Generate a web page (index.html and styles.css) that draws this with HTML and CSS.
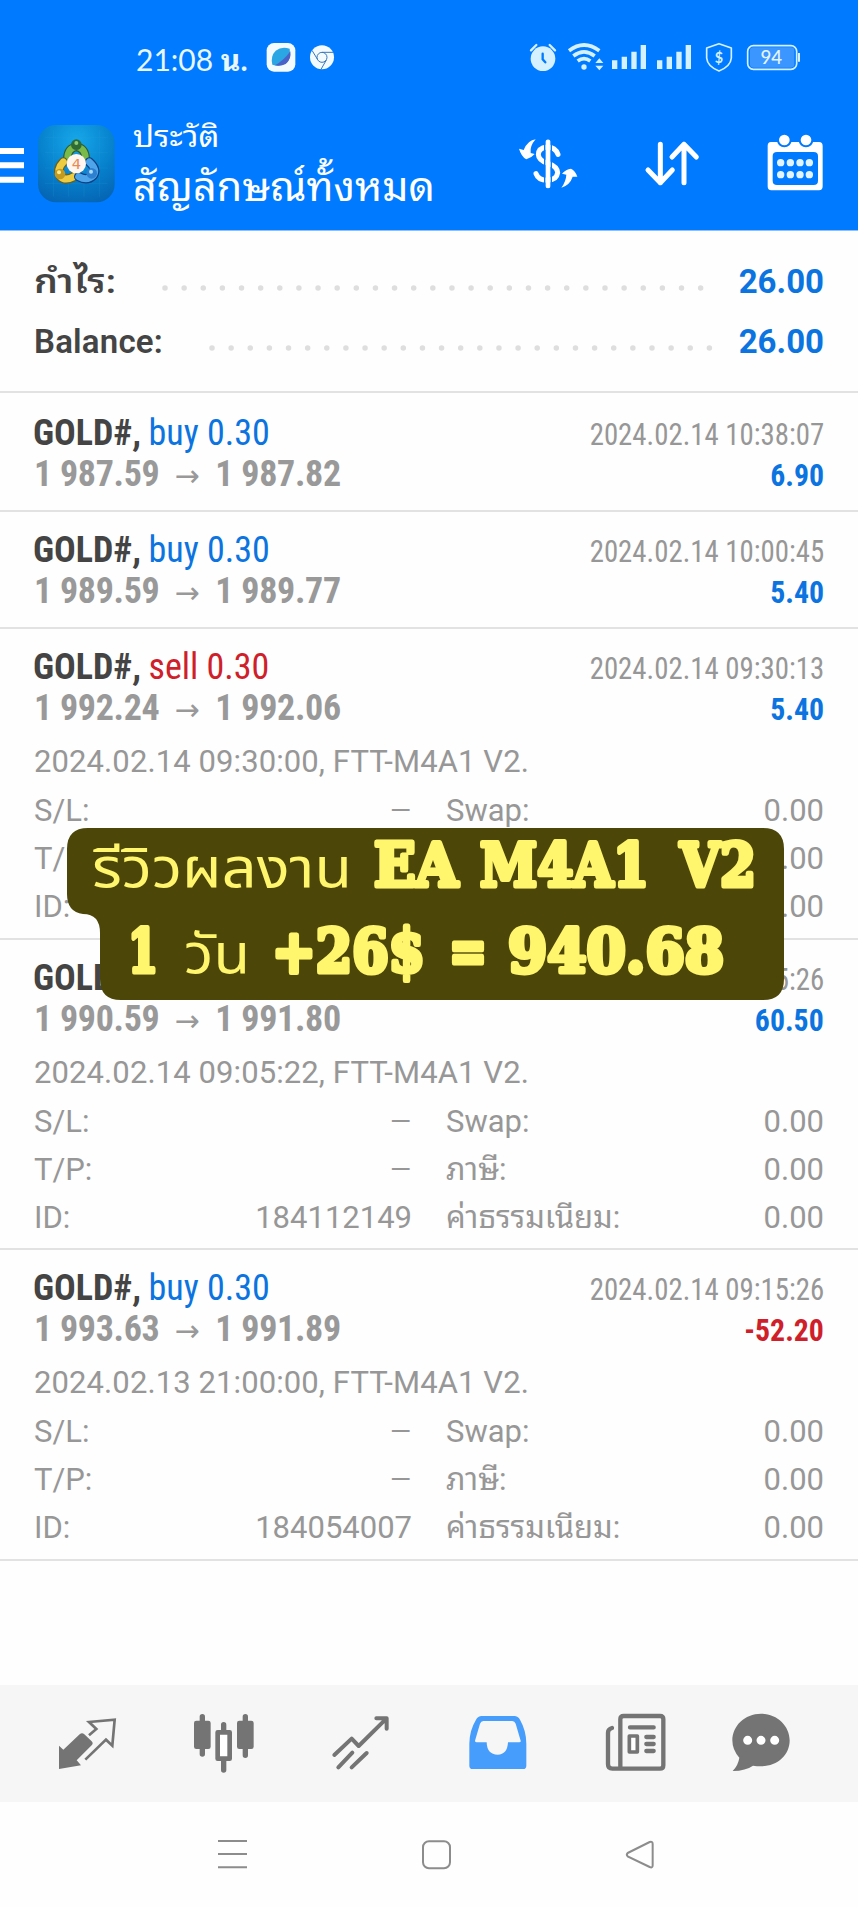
FILE: index.html
```html
<!DOCTYPE html>
<html lang="th">
<head>
  <meta charset="UTF-8" />
  <meta name="viewport" content="width=device-width, initial-scale=1.0" />
  <title>ประวัติ</title>
  <link rel="stylesheet" href="styles.css">
</head>
<body>
  <!-- Header -->
  <header class="header">
    <div class="status">
      <span class="status__time">21:08 <b>น.</b></span>
      <svg class="status__app" width="30" height="32" viewBox="799 66 90 96">
        <rect x="801" y="69" width="86" height="86" rx="22" fill="#f4fbff"/>
        <path d="M818 134Q812 108 828 92Q846 78 870 86Q874 112 862 128Q842 142 818 134Z" fill="#2ba6e4"/>
        <path d="M826 136 Q852 122 872 94 Q876 118 858 132 Q842 140 826 136Z" fill="#4a62c8"/>
      </svg>
      <svg class="status__chrome" width="26" height="32" viewBox="929 66 78 96">
        <circle cx="968" cy="112" r="36" fill="#f4fbff"/>
        <g fill="none" stroke="#3a78b8" stroke-width="3">
          <circle cx="968" cy="112" r="15"/>
          <path d="M968 97H1002M955 119L938 91M981 120L965 148"/>
        </g>
      </svg>
      <div class="status__right">
        <svg width="28" height="32" viewBox="297 66 84 96">
          <circle cx="339" cy="116" r="37" fill="#d5f0ff"/>
          <path d="M303 91L319 75M375 91L359 75" stroke="#d5f0ff" stroke-width="7" stroke-linecap="round"/>
          <path d="M338 101V118L346 127" fill="none" stroke="#007aff" stroke-width="7" stroke-linecap="round"/>
        </svg>
        <svg class="wifi" width="36" height="32" viewBox="414 66 108 96">
          <g fill="none" stroke="#d5f0ff" stroke-width="11">
            <path d="M417 92Q462 58 508 92"/>
            <path d="M430 108Q462 83 494 108"/>
            <path d="M443 123Q462 109 481 123"/>
          </g>
          <circle cx="462" cy="141" r="8" fill="#d5f0ff"/>
          <path d="M508 115L520 129H496ZM508 151L520 137H496Z" fill="#d5f0ff"/>
        </svg>
        <svg class="signal" width="36" height="32" viewBox="543 66 108 96">
          <path d="M546 121h16v26h-16zM575 110h16v37h-16zM604 95h16v52h-16zM632 75h16v72h-16z" fill="#d5f0ff"/>
        </svg>
        <svg class="signal2" width="36" height="32" viewBox="543 66 108 96">
          <path d="M546 121h16v26h-16zM575 110h16v37h-16zM604 95h16v52h-16zM632 75h16v72h-16z" fill="#d5f0ff"/>
        </svg>
        <svg class="shield" width="28" height="32" viewBox="825 66 84 96">
          <path d="M867 71L904 84V114Q902 139 867 153Q832 139 830 114V84Z" fill="none" stroke="#d5f0ff" stroke-width="5" stroke-linejoin="round"/>
          <text class="shield__text" x="867" y="128" text-anchor="middle">$</text>
        </svg>
        <svg class="battery" width="55" height="32" viewBox="948 66 165 96">
          <rect x="960" y="82" width="133" height="61" rx="10" fill="#3b96ff"/>
          <rect x="953" y="77" width="147" height="71" rx="17" fill="none" stroke="#d5f0ff" stroke-width="5"/>
          <path d="M1107 99V125" stroke="#d5f0ff" stroke-width="6"/>
          <text class="battery__text" x="1024" y="132" text-anchor="middle">94</text>
        </svg>
      </div>
    </div>

    <div class="appbar">
      <svg class="appbar__menu" width="24" height="36" viewBox="0 384 72 108">
        <path d="M0 393H72M0 436H72M0 479H72" stroke="#fff" stroke-width="18"/>
      </svg>
      <svg class="appbar__logo" width="78" height="80" viewBox="114 312 234 240">
        <defs>
          <radialGradient id="logoBg" cx=".5" cy=".2" r=".85">
            <stop offset="0" stop-color="#16a8ea"/>
            <stop offset=".6" stop-color="#067fcb"/>
            <stop offset="1" stop-color="#0565b4"/>
          </radialGradient>
        </defs>
        <rect x="114" y="315" width="230" height="232" rx="54" fill="url(#logoBg)"/>
        <path d="M135 352H323M135 398H323M135 444H323M135 490H323M160 330V530M206 330V530M252 330V530M298 330V530" stroke="#2d9fdd" stroke-width="1.5" opacity=".4"/>
        <g stroke-linecap="round" fill="none">
          <path d="M202 416Q203 385 229 380Q256 385 257 416" stroke="#2e5b2f" stroke-width="26"/>
          <path d="M202 416Q203 385 229 380Q256 385 257 416" stroke="#79ba4b" stroke-width="19"/>
          <path d="M190 426Q168 448 182 470Q196 484 222 470" stroke="#6a6018" stroke-width="28"/>
          <path d="M190 426Q168 448 182 470Q196 484 222 470" stroke="#edcc42" stroke-width="21"/>
          <path d="M268 426Q292 448 280 466Q262 484 236 470" stroke="#0b3e83" stroke-width="28"/>
          <path d="M268 426Q292 448 280 466Q262 484 236 470" stroke="#4fa5ea" stroke-width="21"/>
        </g>
        <circle cx="229" cy="374" r="16" fill="#2f6b35"/>
        <circle cx="180" cy="462" r="16" fill="#c39a20"/>
        <circle cx="275" cy="460" r="16" fill="#2d80cf"/>
        <circle cx="229" cy="369" r="6" fill="#8ccb77"/>
        <circle cx="177" cy="457" r="6" fill="#ffed91"/>
        <circle cx="273" cy="455" r="6" fill="#a9dcff"/>
        <circle cx="229" cy="431" r="29" fill="#fff6ef"/>
        <text class="logo__text" x="229" y="447" text-anchor="middle">4</text>
      </svg>
      <div class="appbar__titles">
        <div class="appbar__small">ประวัติ</div>
        <div class="appbar__big">สัญลักษณ์ทั้งหมด</div>
      </div>
      <div class="appbar__actions">
        <svg width="60" height="56" viewBox="264 345 180 168">
          <g fill="none" stroke="#fff" stroke-width="15" stroke-linecap="round">
            <path d="M354 366V497"/>
            <path d="M384 403Q376 381 351 381Q325 384 325 404Q326 422 354 430Q382 439 383 458Q380 480 352 481Q325 481 318 461"/>
          </g>
          <path d="M344 356V505M364 356V505" stroke="#007aff" stroke-width="4"/>
          <path d="M317 358Q294 360 281 390L267 386Q274 410 289 418Q304 414 314 402L302 399Q299 378 317 358ZM394 503Q408 484 409 464L396 461Q408 447 423 446Q436 452 442 470L428 470Q420 495 394 503Z" fill="#fff"/>
        </svg>
        <svg class="sort" width="56" height="56" viewBox="642 345 168 168">
          <path d="M691 373V488M654 450L691 488L727 450M762 488V373M726 411L762 373L799 411" fill="none" stroke="#fff" stroke-width="15" stroke-linecap="round" stroke-linejoin="round"/>
        </svg>
        <svg class="calendar" width="56" height="58" viewBox="1010 342 168 174">
          <path d="M1022 366H1166Q1177 366 1177 378V499Q1177 511 1166 511H1023Q1012 511 1012 499V378Q1012 366 1022 366ZM1040 396Q1027 396 1027 408V482Q1027 495 1040 495H1150Q1163 495 1163 482V408Q1163 396 1150 396Z" fill="#fff" fill-rule="evenodd"/>
          <g fill="#fff" stroke="#007aff" stroke-width="6">
            <circle cx="1062" cy="360" r="19"/>
            <circle cx="1127" cy="360" r="19"/>
          </g>
          <path d="M1051 428h.1M1080 428h.1M1109 428h.1M1137 428h.1M1051 464h.1M1080 464h.1M1109 464h.1M1137 464h.1" stroke="#e2f4ff" stroke-width="22" stroke-linecap="round"/>
        </svg>
      </div>
    </div>
  </header>

  <!-- Totals -->
  <section class="summary">
    <div class="summary__row">
      <span class="summary__label summary__label--thai">กำไร:</span>
      <svg class="dots dots--profit" height="6"><path d="M3 3H540" /></svg>
      <span class="summary__value">26.00</span>
    </div>
    <div class="summary__row">
      <span class="summary__label">Balance:</span>
      <svg class="dots dots--balance" height="6"><path d="M3 3H502" /></svg>
      <span class="summary__value">26.00</span>
    </div>
  </section>

  <!-- Closed trades -->
  <main class="trades">
    <div class="trade">
      <div class="trade__line">
        <span class="trade__symbol">GOLD#, <span class="buy">buy 0.30</span></span>
        <span class="trade__date">2024.02.14 10:38:07</span>
      </div>
      <div class="trade__line">
        <span class="trade__price">1 987.59 <i>→</i> 1 987.82</span>
        <span class="trade__profit">6.90</span>
      </div>
    </div>

    <div class="trade">
      <div class="trade__line">
        <span class="trade__symbol">GOLD#, <span class="buy">buy 0.30</span></span>
        <span class="trade__date">2024.02.14 10:00:45</span>
      </div>
      <div class="trade__line">
        <span class="trade__price">1 989.59 <i>→</i> 1 989.77</span>
        <span class="trade__profit">5.40</span>
      </div>
    </div>

    <div class="trade trade--open">
      <div class="trade__line">
        <span class="trade__symbol">GOLD#, <span class="sell">sell 0.30</span></span>
        <span class="trade__date">2024.02.14 09:30:13</span>
      </div>
      <div class="trade__line">
        <span class="trade__price">1 992.24 <i>→</i> 1 992.06</span>
        <span class="trade__profit">5.40</span>
      </div>
      <div class="trade__comment">2024.02.14 09:30:00, FTT-M4A1 V2.</div>
      <div class="details">
        <span>S/L:</span><span class="dash">—</span><span>Swap:</span><span>0.00</span>
        <span>T/P:</span><span></span><span></span><span>0.00</span>
        <span>ID:</span><span></span><span></span><span>0.00</span>
      </div>
    </div>

    <div class="trade trade--open">
      <div class="trade__line">
        <span class="trade__symbol">GOLD#,</span>
        <span class="trade__date">2024.02.14 09:15:26</span>
      </div>
      <div class="trade__line">
        <span class="trade__price">1 990.59 <i>→</i> 1 991.80</span>
        <span class="trade__profit">60.50</span>
      </div>
      <div class="trade__comment">2024.02.14 09:05:22, FTT-M4A1 V2.</div>
      <div class="details">
        <span>S/L:</span><span class="dash">—</span><span>Swap:</span><span>0.00</span>
        <span>T/P:</span><span class="dash">—</span><span>ภาษี:</span><span>0.00</span>
        <span>ID:</span><span>184112149</span><span>ค่าธรรมเนียม:</span><span>0.00</span>
      </div>
    </div>

    <div class="trade trade--open">
      <div class="trade__line">
        <span class="trade__symbol">GOLD#, <span class="buy">buy 0.30</span></span>
        <span class="trade__date">2024.02.14 09:15:26</span>
      </div>
      <div class="trade__line">
        <span class="trade__price">1 993.63 <i>→</i> 1 991.89</span>
        <span class="trade__profit loss">-52.20</span>
      </div>
      <div class="trade__comment">2024.02.13 21:00:00, FTT-M4A1 V2.</div>
      <div class="details">
        <span>S/L:</span><span class="dash">—</span><span>Swap:</span><span>0.00</span>
        <span>T/P:</span><span class="dash">—</span><span>ภาษี:</span><span>0.00</span>
        <span>ID:</span><span>184054007</span><span>ค่าธรรมเนียม:</span><span>0.00</span>
      </div>
    </div>
  </main>

  <!-- Tab bar -->
  <nav class="tabs">
    <svg width="60" height="60" viewBox="171 96 180 180">
      <path d="M177 197L190 209L239 163Q246 156 253 163L275 184Q281 190 275 196L230 241L243 256L177 267Z" fill="#747474"/>
      <path d="M267 166L289 147L267 126L344 119L337 197L318 179L256 239" fill="none" stroke="#747474" stroke-width="8"/>
    </svg>
    <svg width="60" height="60" viewBox="582 96 180 180">
      <path d="M607 110V222M736 110V226M671 134V150M671 240V270" stroke="#747474" stroke-width="16" stroke-linecap="round"/>
      <rect x="582" y="122" width="50" height="85" rx="7" fill="#747474"/>
      <rect x="711" y="122" width="50" height="85" rx="7" fill="#747474"/>
      <rect x="653" y="157" width="36" height="79" fill="#fff" stroke="#747474" stroke-width="14" stroke-linejoin="round"/>
    </svg>
    <svg width="60" height="60" viewBox="993 96 180 180">
      <g fill="none" stroke="#747474" stroke-width="12" stroke-linecap="round" stroke-linejoin="round">
        <path d="M1003 225L1055 176L1076 198L1159 116M1129 115H1160V146"/>
        <path d="M1015 262L1057 218M1055 262L1100 219"/>
      </g>
    </svg>
    <svg width="60" height="60" viewBox="114 96 180 180">
      <path d="M155 108H253Q264 108 270 119Q289 152 289 191V257Q289 267 279 267H128Q118 267 118 257V191Q118 152 138 119Q144 108 155 108ZM160 123Q153 123 150 131L135 182Q135 187 140 187H170Q171 224 203 224Q232 224 234 187H268Q273 187 272 182L257 131Q254 123 247 123Z" fill="#479dfb" fill-rule="evenodd"/>
    </svg>
    <svg width="60" height="60" viewBox="525 96 180 180">
      <g fill="none" stroke="#747474" stroke-width="13" stroke-linecap="round" stroke-linejoin="round">
        <path d="M546 144Q534 147 534 158V253Q534 266 547 266H690Q700 266 700 256V118Q700 108 690 108H581Q571 108 571 118V264"/>
        <path d="M600 142H671M649 171H671M649 192H671M649 213H671"/>
      </g>
      <rect x="598" y="168" width="24" height="48" fill="#fff" stroke="#747474" stroke-width="11" stroke-linejoin="round"/>
    </svg>
    <svg class="tabs__chat" width="60" height="60" viewBox="900 96 180 180">
      <path d="M993 101C1042 101 1079 138 1079 181C1079 226 1042 259 993 259Q980 259 969 257Q948 272 908 273Q925 255 928 233Q907 210 907 181C907 138 944 101 993 101Z" fill="#747474"/>
      <path d="M953 181h.1M993 181h.1M1034 181h.1" stroke="#fff" stroke-width="27" stroke-linecap="round"/>
    </svg>
  </nav>

  <!-- System buttons -->
  <div class="sysbar">
    <svg width="32" height="32" viewBox="650 478 96 96">
      <path d="M653 484H740M653 523H740M653 563H740" stroke="#8c8c8c" stroke-width="6"/>
    </svg>
    <svg width="32" height="32" viewBox="0 0 32 32">
      <rect x="2" y="2.200" width="27" height="27" rx="6" fill="none" stroke="#8c8c8c" stroke-width="2"/>
    </svg>
    <svg width="32" height="32" viewBox="590 476 96 96">
      <path d="M598 518L664 485Q673 482 673 491V555Q673 564 664 560L598 528Q593 523 598 518Z" fill="none" stroke="#8c8c8c" stroke-width="6"/>
    </svg>
  </div>

  <!-- Caption sticker -->
  <svg class="caption" width="718" height="172" viewBox="67 828 718 172">
    <path d="M88 828H763Q784 828 784 849V979Q784 1000 763 1000H121Q100 1000 100 979V933Q100 914 83 914Q67 912 67 894V849Q67 828 88 828Z" fill="#4c4608"/>
    <g class="caption__thai">
      <text x="92" y="887" textLength="260" lengthAdjust="spacingAndGlyphs">รีวิวผลงาน</text>
      <text x="184" y="973" textLength="66" lengthAdjust="spacingAndGlyphs">วัน</text>
    </g>
    <g class="caption__bold">
      <text x="374" y="886" textLength="84" lengthAdjust="spacingAndGlyphs">EA</text>
      <text x="480" y="886" textLength="169" lengthAdjust="spacingAndGlyphs">M4A1</text>
      <text x="680" y="886" textLength="76" lengthAdjust="spacingAndGlyphs">V2</text>
      <text x="128" y="972" textLength="30" lengthAdjust="spacingAndGlyphs">1</text>
      <text x="272" y="972" textLength="153" lengthAdjust="spacingAndGlyphs">+26$</text>
      <text x="449" y="972" textLength="38" lengthAdjust="spacingAndGlyphs">=</text>
      <text x="508" y="972" textLength="216" lengthAdjust="spacingAndGlyphs">940.68</text>
    </g>
  </svg>
</body>
</html>
```

FILE: styles.css
```css
:root {
  --blue: #007aff;
  --buy: #0b74e0;
  --sell: #cf1f2b;
  --dark: #444;
  --grey: #979797;
  --line: #e2e2e2;
}

* {
  box-sizing: border-box;
}

body {
  position: relative;
  margin: 0;
  width: 858px;
  height: 1907px;
  overflow: hidden;
  display: flex;
  flex-direction: column;
  background: #fefefe;
  font-family: Roboto, "Noto Sans Thai Looped", "Noto Looped Thai", Loma, Garuda, Waree, "Noto Sans Thai", sans-serif;
}

svg {
  display: block;
  flex: none;
  overflow: visible;
}

/* Header */
.header {
  height: 231px;
  background: var(--blue);
  border-bottom: 1px solid #8fbff8;
  color: #fff;
}

.status {
  height: 104px;
  padding: 42px 57px 0 136px;
  display: flex;
  align-items: flex-start;
  color: #e8f7ff;
}

.status__time {
  width: 111px;
  font-family: Lato, "Noto Sans Thai Looped", "Noto Looped Thai", Loma, Garuda, Waree, sans-serif;
  font-size: 30px;
  line-height: 34px;
  white-space: nowrap;
}

.status__app {
  margin-left: 19px;
}

.status__chrome {
  margin-left: 13px;
}

.status__right {
  display: flex;
  margin-left: auto;
}

.wifi {
  margin-left: 11px;
}

.signal {
  margin-left: 7px;
}

.signal2 {
  margin-left: 9px;
}

.shield,
.battery {
  margin-left: 13px;
}

.shield__text {
  font: 700 43px Lato, sans-serif;
  fill: #d5f0ff;
}

.battery__text {
  font: 500 56px Lato, sans-serif;
  fill: #e2f5ff;
}

.appbar {
  height: 126px;
  padding-right: 35px;
  display: flex;
  align-items: flex-start;
}

.appbar__menu {
  margin-top: 44px;
}

.appbar__logo {
  margin: 20px 0 0 14px;
}

.logo__text {
  font: 400 44px "DejaVu Sans", sans-serif;
  fill: #e88a55;
}

.appbar__titles {
  margin-left: 17px;
  white-space: nowrap;
}

.appbar__small {
  margin-top: 9px;
  height: 48px;
  font-size: 30px;
  line-height: 48px;
  transform: scaleX(1.09);
  transform-origin: left;
}

.appbar__big {
  font-size: 40px;
  line-height: 54px;
  transform: scaleX(1.033);
  transform-origin: left;
}

.appbar__actions {
  display: flex;
  margin: 31px 0 0 auto;
}

.sort {
  margin-left: 66px;
}

.calendar {
  margin: -1px 0 0 67px;
}

/* Totals */
.summary {
  height: 162px;
  padding: 20px 34px 0;
  border-bottom: 2px solid var(--line);
}

.summary__row {
  height: 60px;
  display: flex;
  align-items: center;
  font-size: 33px;
  font-weight: 700;
}

.summary__label {
  color: var(--dark);
  font-weight: 600;
  letter-spacing: 0.2px;
}

.summary__label--thai {
  margin-top: -5px;
  transform: scaleX(1.14);
  transform-origin: left;
}

.summary__value {
  color: var(--buy);
}

.dots {
  margin: 14px 0 0 auto;
}

.dots path {
  fill: none;
  stroke: #dedede;
  stroke-width: 5.5;
  stroke-linecap: round;
  stroke-dasharray: 0 19.13;
}

.dots--profit {
  width: 577px;
}

.dots--balance {
  width: 530px;
}

/* Closed trades */
.trades {
  flex: 1;
  padding-top: 2px;
}

.trade {
  height: 117px;
  padding: 18px 34px 0;
  border-bottom: 2px solid var(--line);
  white-space: nowrap;
}

.trade--open {
  height: 310.7px;
}

.trade__line {
  height: 41px;
  display: flex;
  justify-content: space-between;
  align-items: baseline;
  font-family: "Roboto Condensed", Roboto, sans-serif;
  font-stretch: 75%;
  line-height: 41px;
}

.trade__symbol {
  margin-left: -1px;
  font-size: 36px;
  font-weight: 700;
  color: var(--dark);
}

.trade__symbol span {
  margin-left: -1px;
  font-weight: 400;
}

.buy {
  color: var(--buy);
}

.sell {
  color: var(--sell);
}

.trade__date {
  font-size: 31px;
  color: var(--grey);
  transform: scaleX(0.93);
  transform-origin: right;
}

.trade__price {
  font-size: 36px;
  font-weight: 700;
  letter-spacing: -0.3px;
  color: #999;
}

.trade__price i {
  margin: 0 8px 0 7px;
  font: normal 400 30px "DejaVu Sans", sans-serif;
}

.trade__profit {
  font-size: 31px;
  font-weight: 700;
  color: var(--buy);
  transform: scaleX(0.96);
  transform-origin: right;
}

.loss {
  color: var(--sell);
}

.trade__comment {
  margin-top: 9px;
  height: 49px;
  font-size: 31px;
  letter-spacing: 0.1px;
  line-height: 48px;
  color: var(--grey);
}

.details {
  display: grid;
  grid-template-columns: 100px 278px 234px 178px;
  grid-auto-rows: 48px;
  font-size: 31px;
  line-height: 48px;
  color: var(--grey);
}

.details span:nth-child(even) {
  text-align: right;
}

.details span:nth-child(4n + 3) {
  padding-left: 34px;
}

.details .dash {
  padding-right: 1px;
  font-size: 27px;
}

/* Tab bar */
.tabs {
  height: 117px;
  padding: 27px 0 0 57px;
  display: flex;
  gap: 77px;
  background: #f6f6f6;
}

.tabs__chat {
  margin-left: -12px;
}

.sysbar {
  height: 105px;
  padding: 37px 0 0 217px;
  display: flex;
  gap: 172px;
}

/* Caption sticker */
.caption {
  position: absolute;
  left: 67px;
  top: 828px;
}

.caption text {
  fill: #fff66e;
}

.caption__thai {
  font: 400 55px "Noto Sans Thai", sans-serif;
}

.caption__bold {
  font: 700 60px "DejaVu Serif", serif;
  stroke: #fff66e;
  stroke-width: 5px;
  stroke-linejoin: round;
}
```
